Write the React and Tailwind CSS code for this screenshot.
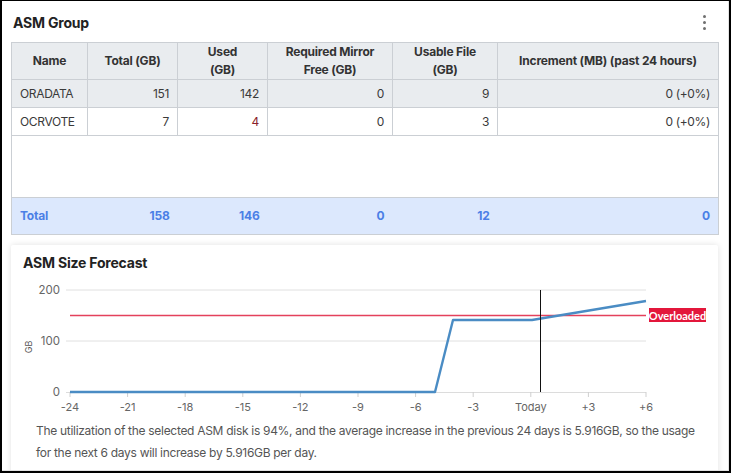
import React from "react";

const ticks = ["-24", "-21", "-18", "-15", "-12", "-9", "-6", "-3", "Today", "+3", "+6"];

function Chart() {
  return (
    <svg width="707" height="140" className="block">
      <g fontFamily="Inter, 'Liberation Sans', sans-serif" fontSize="11.5" fill="#666">
        <text x="49" y="10" textAnchor="end" dominantBaseline="central">200</text>
        <text x="49" y="61" textAnchor="end" dominantBaseline="central">100</text>
        <text x="49" y="112" textAnchor="end" dominantBaseline="central">0</text>
      </g>
      <text
        x="17"
        y="67"
        transform="rotate(-90 17 67)"
        textAnchor="middle"
        dominantBaseline="central"
        fontFamily="Inter, 'Liberation Sans', sans-serif"
        fontSize="9"
        fill="#555"
      >
        GB
      </text>
      <line x1="55" y1="10" x2="635" y2="10" stroke="#e0e0e0" strokeWidth="1" />
      <line x1="55" y1="61" x2="635" y2="61" stroke="#e0e0e0" strokeWidth="1" />
      <line x1="55" y1="112.5" x2="635" y2="112.5" stroke="#dcdcdc" strokeWidth="1" />
      {ticks.map((t, i) => {
        const x = 59 + i * 57.6;
        return (
          <g key={t}>
            <line x1={x} y1="112" x2={x} y2="117" stroke="#cfcfcf" strokeWidth="1" />
            <text
              x={x}
              y="127"
              textAnchor="middle"
              dominantBaseline="central"
              fontFamily="Inter, 'Liberation Sans', sans-serif"
              fontSize="11"
              fill="#666"
            >
              {t}
            </text>
          </g>
        );
      })}
      <line x1="59" y1="35.5" x2="635" y2="35.5" style={{ stroke: "#e4415c" }} strokeWidth="1.3" />
      <polyline
        points="59,112 424,112 442,40 521,40 635,21"
        fill="none"
        stroke="#4a8cc4"
        strokeWidth="2.4"
        strokeLinejoin="round"
      />
      <line x1="529.5" y1="10" x2="529.5" y2="112" stroke="#111" strokeWidth="1" />
      <rect x="638" y="28" width="57" height="14" fill="#e3173b" />
      <text
        x="666.5"
        y="35.2"
        textAnchor="middle"
        dominantBaseline="central"
        fontFamily="Lato, 'Liberation Sans', sans-serif"
        fontWeight="700"
        fontSize="11"
        fill="#fff"
      >
        Overloaded
      </text>
    </svg>
  );
}

export default function App() {
  const th = "border border-[#cbcfd4] bg-[#e9ecef] text-[12px] font-bold tracking-[-0.2px] text-[#333] text-center leading-[18px] px-1";
  const td = "border border-[#cbcfd4] text-[12px] tracking-[-0.35px] text-[#3a3a3a] px-2 h-[28px]";
  const totBase = "text-[12px] font-bold tracking-[-0.2px] text-[#4b7fe6] px-2";
  const tot = totBase + " text-right";
  return (
    <div
      className="w-[731px] h-[473px] overflow-hidden border-t border-l-2 border-r-2 border-b-2 border-black bg-white"
      style={{ fontFamily: "Inter, 'Liberation Sans', sans-serif" }}
    >
      <div className="h-full overflow-hidden border-r border-b border-[#e3e3e3] pl-[9px] pr-[10px]">
        <div className="flex items-center justify-between h-[20px] mt-[11px] mb-[10px]">
          <div className="pl-[2px] text-[14px] font-bold tracking-[-0.2px] text-[#222]">ASM Group</div>
          <div className="flex flex-col gap-[3px] items-center mr-[12px]">
            <span className="block w-[3px] h-[3px] rounded-full bg-[#707070]" />
            <span className="block w-[3px] h-[3px] rounded-full bg-[#707070]" />
            <span className="block w-[3px] h-[3px] rounded-full bg-[#707070]" />
          </div>
        </div>
        <table className="table-fixed w-[707px] border-collapse border border-[#cbcfd4]">
          <colgroup>
            <col className="w-[76px]" />
            <col className="w-[90px]" />
            <col className="w-[90px]" />
            <col className="w-[125px]" />
            <col className="w-[105px]" />
            <col className="w-[221px]" />
          </colgroup>
          <thead>
            <tr className="h-[37px]">
              <th className={th}>Name</th>
              <th className={th}>Total (GB)</th>
              <th className={th}>Used<br />(GB)</th>
              <th className={th}>Required Mirror<br />Free (GB)</th>
              <th className={th}>Usable File<br />(GB)</th>
              <th className={th}>Increment (MB) (past 24 hours)</th>
            </tr>
          </thead>
          <tbody>
            <tr className="bg-[#e9ecef]">
              <td className={td}>ORADATA</td>
              <td className={td + " text-right"}>151</td>
              <td className={td + " text-right"}>142</td>
              <td className={td + " text-right"}>0</td>
              <td className={td + " text-right"}>9</td>
              <td className={td + " text-right"}>0 (+0%)</td>
            </tr>
            <tr>
              <td className={td}>OCRVOTE</td>
              <td className={td + " text-right"}>7</td>
              <td className={td + " text-right !text-[#8b1f2c]"}>4</td>
              <td className={td + " text-right"}>0</td>
              <td className={td + " text-right"}>3</td>
              <td className={td + " text-right"}>0 (+0%)</td>
            </tr>
            <tr className="h-[62px]">
              <td colSpan={6} className="border-x border-[#cbcfd4]"></td>
            </tr>
            <tr className="h-[37px] bg-[#dce8fd] border-t border-[#cbcfd4]">
              <td className={totBase + " text-left"}>Total</td>
              <td className={tot}>158</td>
              <td className={tot}>146</td>
              <td className={tot}>0</td>
              <td className={tot}>12</td>
              <td className={tot}>0</td>
            </tr>
          </tbody>
        </table>
        <div className="mt-[10px] w-[707px] bg-white rounded-[2px] shadow-[0_0_6px_rgba(0,0,0,0.12)] pb-4">
          <div className="pt-[8px] pl-[12px] h-[35px] leading-[20px] text-[14px] font-bold tracking-[-0.2px] text-[#222]">
            ASM Size Forecast
          </div>
          <Chart />
          <p className="pl-[25px] pr-[12px] text-[12px] tracking-[-0.3px] leading-[22px] text-[#555]">
            The utilization of the selected ASM disk is 94%, and the average increase in the previous 24 days is 5.916GB, so the usage for the next 6 days will increase by 5.916GB per day.
          </p>
        </div>
      </div>
    </div>
  );
}
